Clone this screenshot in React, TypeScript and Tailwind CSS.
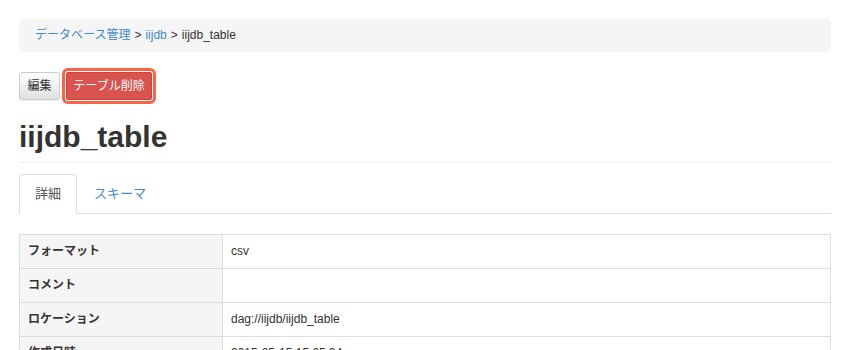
import React from 'react';

// ── Table detail page (Bootstrap 3 look) ──────────────────────────────────────

const rows: { label: string; value: string }[] = [
    { label: 'フォーマット', value: 'csv' },
    { label: 'コメント',     value: '' },
    { label: 'ロケーション', value: 'dag://iijdb/iijdb_table' },
    { label: '作成日時',     value: '2015-05-15 15:05:34' },
];

export default function App() {
    return (
        <div className="min-h-[350px] bg-white px-[19px] pt-[19px] text-[12px] text-[#333] [font-family:'Liberation_Sans','Noto_Sans_CJK_JP',sans-serif]">

            <div className="h-[33px] rounded-[4px] bg-[#f5f5f5] px-[16px] flex items-center leading-[17px]">
                <a className="text-[#428bca]">データベース管理</a>
                <span className="mx-[4px]">&gt;</span>
                <a className="text-[#428bca]">iijdb</a>
                <span className="mx-[4px]">&gt;</span>
                <span>iijdb_table</span>
            </div>

            <div className="mt-[20px] flex items-center gap-[6px]">
                <button className="h-[28px] w-[41px] rounded-[3px] border border-[#ccc] bg-gradient-to-b from-white to-[#e0e0e0] text-[12px] text-[#333] shadow-[0_1px_1px_rgba(0,0,0,0.075)]">
                    編集
                </button>
                <button className="h-[28px] w-[86px] rounded-[2px] border border-[#d43f3a] bg-[#d9534f] text-[12px] text-white outline-[3px] outline-solid outline-[#fd6244] outline-offset-[1px]">
                    テーブル削除
                </button>
            </div>

            <div className="mt-[20px] pb-[9px] border-b border-[#eee]">
                <h1 className="text-[30px] leading-[33px] font-bold text-[#333]">iijdb_table</h1>
            </div>

            <ul className="mt-[11px] flex border-b border-[#ddd] text-[13px] leading-[18px]">
                <li className="-mb-px mr-[2px]">
                    <a className="block rounded-t-[4px] border border-[#ddd] border-b-white bg-white px-[15px] py-[10px] text-[#555]">詳細</a>
                </li>
                <li className="-mb-px mr-[2px]">
                    <a className="block border border-transparent px-[14px] py-[10px] text-[#428bca]">スキーマ</a>
                </li>
            </ul>

            <table className="mt-[20px] w-full border-collapse border border-[#ddd]">
                <tbody>
                    {rows.map(r => (
                        <tr key={r.label}>
                            <th className="w-[203px] border border-[#ddd] bg-[#f5f5f5] p-[8px] text-left font-bold leading-[17px]">
                                {r.label}
                            </th>
                            <td className="border border-[#ddd] p-[8px] leading-[17px]">{r.value}</td>
                        </tr>
                    ))}
                </tbody>
            </table>
        </div>
    );
}
